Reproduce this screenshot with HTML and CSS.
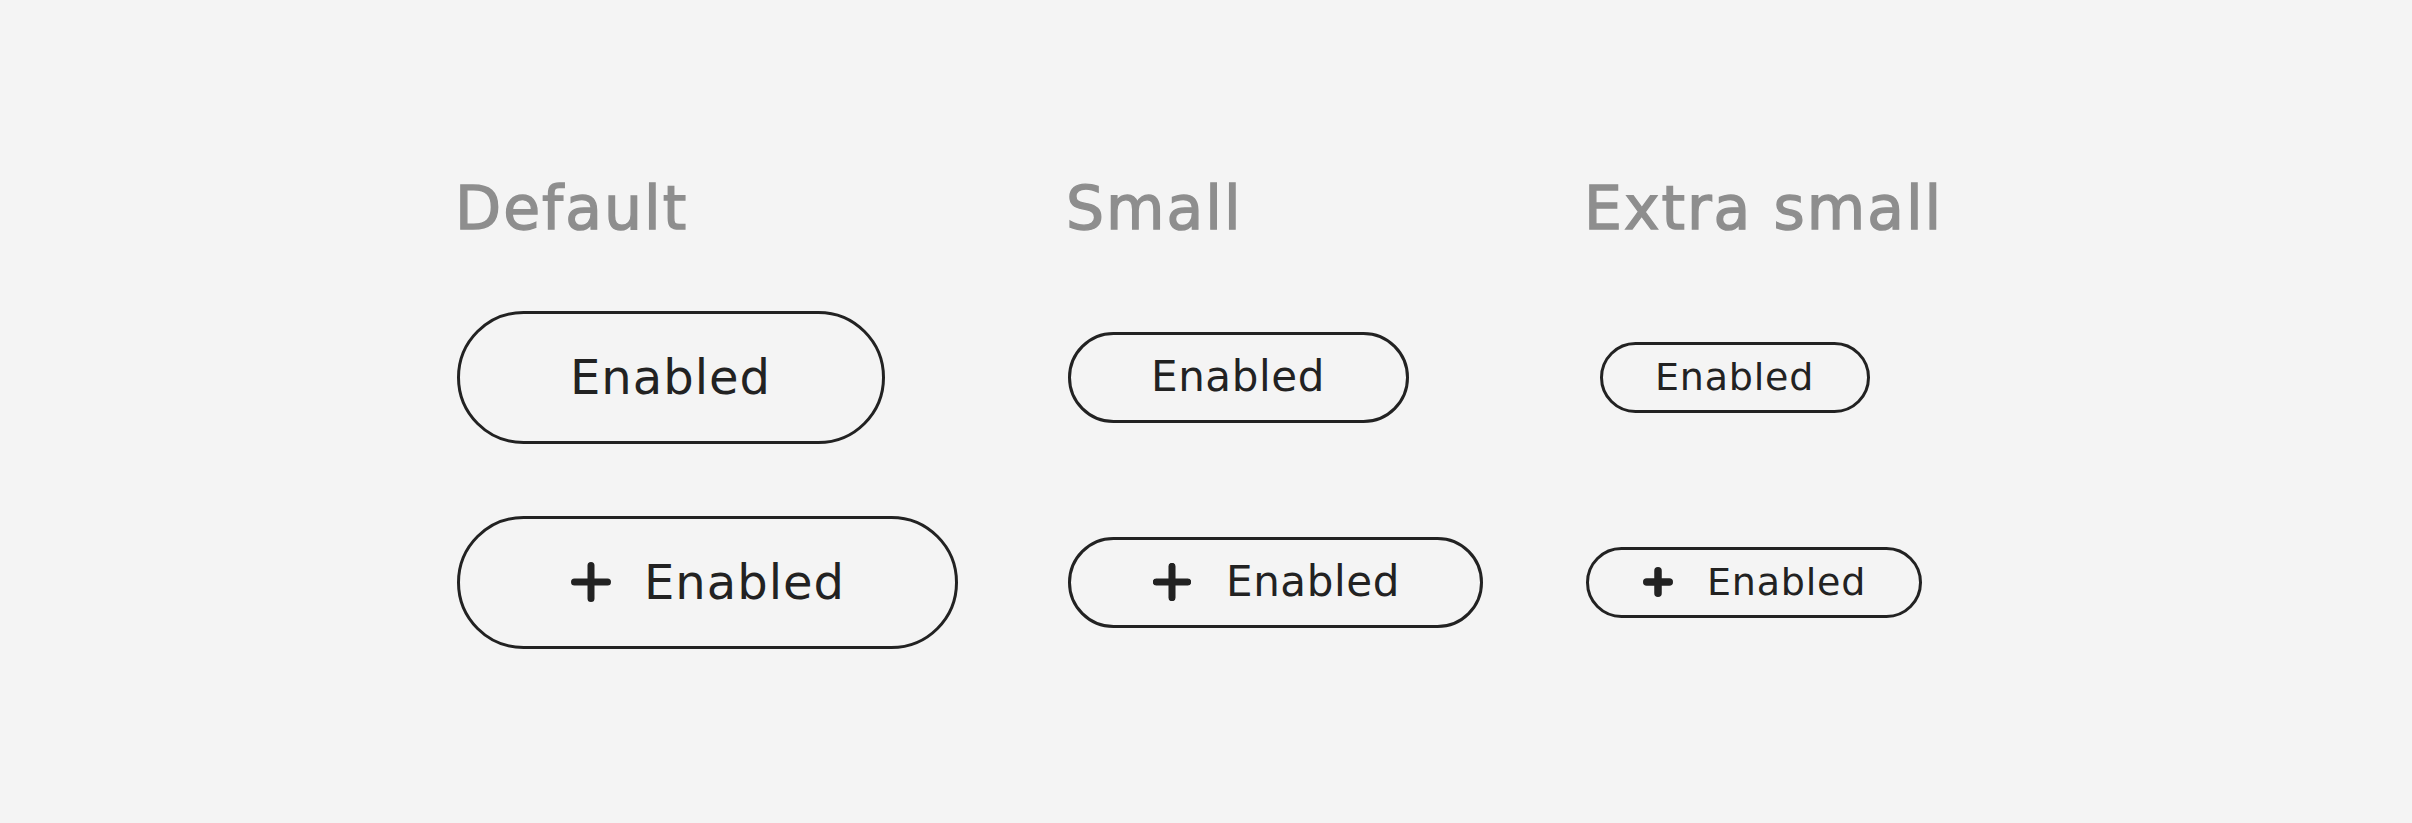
FILE: index.html
```html
<!DOCTYPE html>
<html lang="en">
<head>
<meta charset="utf-8">
<title>Outlined buttons</title>
<link rel="stylesheet" href="styles.css">
</head>
<body>
<main class="specimen">
  <h2 class="col-title">Default</h2>
  <h2 class="col-title">Small</h2>
  <h2 class="col-title">Extra small</h2>

  <button class="btn btn-md">Enabled</button>
  <button class="btn btn-sm">Enabled</button>
  <button class="btn btn-xs btn-xs-shift">Enabled</button>

  <button class="btn btn-md btn-icon">
    <svg class="icon" viewBox="0 0 40 40" aria-hidden="true"><path d="M20 3.5V36.5M3.5 20H36.5"/></svg>
    <span>Enabled</span>
  </button>
  <button class="btn btn-sm btn-icon">
    <svg class="icon" viewBox="0 0 40 40" aria-hidden="true"><path d="M20 3.5V36.5M3.5 20H36.5"/></svg>
    <span>Enabled</span>
  </button>
  <button class="btn btn-xs btn-icon">
    <svg class="icon" viewBox="0 0 40 40" aria-hidden="true"><path d="M20 5V35M5 20H35"/></svg>
    <span>Enabled</span>
  </button>
</main>
</body>
</html>
```

FILE: styles.css
```css
html, body {
  margin: 0;
  padding: 0;
  background: #f4f4f4;
}

body {
  font-family: "DejaVu Sans", "Liberation Sans", sans-serif;
  color: #222222;
}

.specimen {
  display: grid;
  grid-template-columns: 611px 518px auto;
  grid-template-rows: 62px 134px 134px;
  row-gap: 71px;
  align-items: center;
  justify-items: start;
  padding: 177px 0 0 457px;
}

.col-title {
  align-self: start;
  margin: 0 0 0 -2px;
  font-size: 60px;
  line-height: 62px;
  font-weight: 400;
  letter-spacing: 2px;
  color: #8e8e8e;
  -webkit-text-stroke: 1.4px #8e8e8e;
}

.btn {
  display: inline-flex;
  align-items: center;
  justify-content: center;
  box-sizing: border-box;
  margin: 0;
  border: 3px solid #222222;
  background: transparent;
  color: #222222;
  font-family: inherit;
  font-weight: 400;
  white-space: nowrap;
  line-height: 1;
  cursor: pointer;
}

.btn-md {
  height: 133px;
  border-radius: 66.5px;
  padding: 0 111px 0 110px;
  font-size: 48px;
  letter-spacing: 1px;
}

.btn-sm {
  height: 91px;
  border-radius: 45.5px;
  padding: 0 81px 0 80px;
  font-size: 42px;
  letter-spacing: 0.6px;
}

.btn-xs {
  height: 71px;
  border-radius: 35.5px;
  padding: 0 53px 0 52px;
  font-size: 38px;
  letter-spacing: 0.8px;
}

.btn-xs-shift {
  margin-left: 14px;
}

.icon {
  display: block;
  flex: none;
  fill: none;
  stroke: #222222;
  stroke-linecap: round;
}

.btn-md.btn-icon {
  padding: 0 110px 0 111px;
  gap: 33px;
}
.btn-md .icon {
  width: 40px;
  height: 40px;
  stroke-width: 7;
}

.btn-sm.btn-icon {
  padding: 0 80px 0 82px;
  gap: 35px;
}
.btn-sm .icon {
  width: 38px;
  height: 38px;
  stroke-width: 7.4;
}

.btn-xs.btn-icon {
  padding: 0 53px 0 54px;
  gap: 34px;
}
.btn-xs .icon {
  width: 30px;
  height: 30px;
  stroke-width: 10;
}
```
